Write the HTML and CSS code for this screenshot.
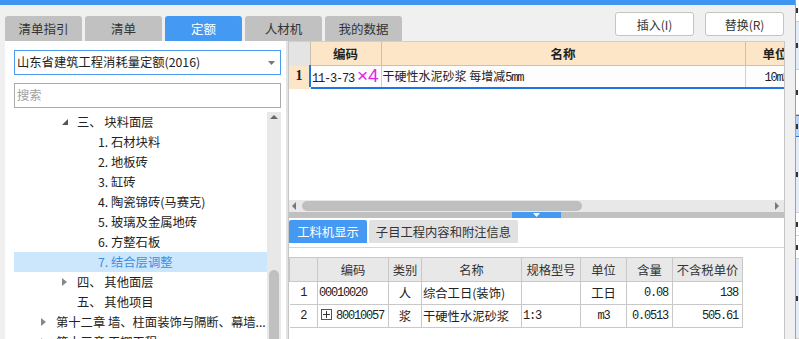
FILE: index.html
```html
<!DOCTYPE html>
<html lang="zh-CN">
<head>
<meta charset="utf-8">
<title>定额</title>
<link rel="stylesheet" href="styles.css">
</head>
<body>
<div class="app">
  <div class="main">
    <div class="topbar"></div>
    <div class="toolbar">
      <div class="tabs">
        <div class="tab">清单指引</div>
        <div class="tab">清单</div>
        <div class="tab active">定额</div>
        <div class="tab">人材机</div>
        <div class="tab">我的数据</div>
      </div>
      <div class="btns">
        <div class="btn">插入(I)</div>
        <div class="btn">替换(R)</div>
      </div>
    </div>
    <div class="body">
      <div class="left">
        <div class="select">
          <span>山东省建筑工程消耗量定额(2016)</span>
          <svg class="caret" width="7" height="4" viewBox="0 0 7 4"><path d="M0 0H7L3.5 4Z" fill="#777"/></svg>
        </div>
        <div class="search">搜索</div>
        <div class="treewrap">
          <div class="tree">
            <div class="row l1"><span class="arr"><svg width="6" height="6" viewBox="0 0 6 6"><path d="M6 0V6H0Z" fill="#555"/></svg></span><span>三、 块料面层</span></div>
            <div class="row l2"><span class="arr"></span><span>1. 石材块料</span></div>
            <div class="row l2"><span class="arr"></span><span>2. 地板砖</span></div>
            <div class="row l2"><span class="arr"></span><span>3. 缸砖</span></div>
            <div class="row l2"><span class="arr"></span><span>4. 陶瓷锦砖(马赛克)</span></div>
            <div class="row l2"><span class="arr"></span><span>5. 玻璃及金属地砖</span></div>
            <div class="row l2"><span class="arr"></span><span>6. 方整石板</span></div>
            <div class="row l2 sel"><span class="arr"></span><span>7. 结合层调整</span></div>
            <div class="row l1"><span class="arr"><svg width="5" height="8" viewBox="0 0 5 8"><path d="M0 0L5 4L0 8Z" fill="#888"/></svg></span><span>四、 其他面层</span></div>
            <div class="row l1"><span class="arr"></span><span>五、 其他项目</span></div>
            <div class="row l0"><span class="arr"><svg width="5" height="8" viewBox="0 0 5 8"><path d="M0 0L5 4L0 8Z" fill="#888"/></svg></span><span>第十二章 墙、柱面装饰与隔断、幕墙...</span></div>
            <div class="row l0"><span class="arr"><svg width="5" height="8" viewBox="0 0 5 8"><path d="M0 0L5 4L0 8Z" fill="#888"/></svg></span><span>第十三章 天棚工程</span></div>
          </div>
          <div class="vscroll">
            <svg class="up" width="8" height="4" viewBox="0 0 8 4"><path d="M0 4H8L4 0Z" fill="#666"/></svg>
            <div class="vthumb"></div>
          </div>
        </div>
      </div>
      <div class="gap"></div>
      <div class="right">
        <div class="topgrid">
          <table class="qt">
            <colgroup><col class="c0"><col class="c1"><col class="c2"><col class="c3"></colgroup>
            <thead>
              <tr><th class="corner"></th><th>编码</th><th>名称</th><th>单位</th></tr>
            </thead>
            <tbody>
              <tr class="cur">
                <td class="rn">1</td>
                <td class="code"><span class="mono">11-3-73</span><span class="mul">×4</span></td>
                <td class="nm">干硬性水泥砂浆 每增减<span class="mono">5mm</span></td>
                <td class="unit"><span class="mono">10m2</span></td>
              </tr>
            </tbody>
          </table>
        </div>
        <div class="hscroll">
          <svg width="4" height="8" viewBox="0 0 4 8"><path d="M4 0V8L0 4Z" fill="#777"/></svg>
          <div class="htrack"><div class="hthumb"></div></div>
          <svg width="4" height="8" viewBox="0 0 4 8"><path d="M0 0V8L4 4Z" fill="#777"/></svg>
        </div>
        <div class="splitter"><div class="grip"><svg width="7" height="4" viewBox="0 0 7 4"><path d="M0 0H7L3.5 4Z" fill="#fff"/></svg></div></div>
        <div class="bottom">
          <div class="btabs">
            <div class="btab active">工料机显示</div>
            <div class="btab">子目工程内容和附注信息</div>
          </div>
          <div class="bpanel">
            <table class="lt">
              <colgroup><col style="width:28px"><col style="width:71px"><col style="width:33px"><col style="width:100px"><col style="width:59px"><col style="width:46px"><col style="width:46px"><col style="width:70px"></colgroup>
              <thead>
                <tr><th></th><th>编码</th><th>类别</th><th>名称</th><th>规格型号</th><th>单位</th><th>含量</th><th>不含税单价</th></tr>
              </thead>
              <tbody>
                <tr><td class="ctr mono">1</td><td class="mono">00010020</td><td class="ctr">人</td><td>综合工日(装饰)</td><td></td><td class="ctr">工日</td><td class="num mono">0.08</td><td class="num mono">138</td></tr>
                <tr><td class="ctr mono">2</td><td class="mono"><span class="plus"></span>80010057</td><td class="ctr">浆</td><td>干硬性水泥砂浆</td><td class="mono">1:3</td><td class="ctr mono">m3</td><td class="num mono">0.0513</td><td class="num mono">505.61</td></tr>
              </tbody>
            </table>
          </div>
        </div>
      </div>
    </div>
  </div>
  <div class="side">
    <div class="seg w h22"><i class="mk"></i></div>
    <div class="seg b h48"><i class="mk"></i></div>
    <div class="seg w h45"><i class="mk"></i></div>
    <div class="seg hl h22"><i class="mk"></i></div>
    <div class="seg b h76"><i class="mk"></i></div>
    <div class="seg w h23"><i class="mk"></i></div>
    <div class="seg w h23"><i class="mk"></i></div>
    <div class="seg b h80"><i class="mk"></i></div>
  </div>
</div>
</body>
</html>
```
FILE: styles.css
```css
* { box-sizing: border-box; }
html, body { margin: 0; padding: 0; }
body {
  width: 799px;
  height: 339px;
  overflow: hidden;
  background: #f0f0f0;
  font-family: "Noto Sans CJK SC", "Noto Sans", sans-serif;
  font-size: 12px;
  color: #222;
}
.app { display: flex; height: 339px; overflow: hidden; }
.main { width: 795px; display: flex; flex-direction: column; background: #f0f0f0; }
.topbar { height: 5px; background: #3f95f2; flex: none; }
.toolbar {
  height: 36px;
  flex: none;
  display: flex;
  justify-content: space-between;
  padding: 0 11px 0 5px;
}
.tabs { display: flex; gap: 3px; align-self: flex-end; }
.tab {
  width: 77px;
  height: 25px;
  background: #c1c1c1;
  border-radius: 3px 3px 0 0;
  display: flex;
  align-items: center;
  justify-content: center;
  color: #333;
  font-size: 12.5px;
}
.tab.active { background: #4499f3; color: #fff; }
.btns { display: flex; gap: 11px; padding-top: 7px; }
.btn {
  height: 24px;
  width: 79px;
  background: #fff;
  border: 1px solid #c4c4c4;
  border-radius: 3px;
  display: flex;
  align-items: center;
  justify-content: center;
  color: #333;
}
.body { flex: 1; display: flex; min-height: 0; }
.left {
  margin-left: 5px;
  width: 281px;
  background: #fff;
  padding: 9px 5px 0 9px;
  display: flex;
  flex-direction: column;
  min-height: 0;
}
.select {
  height: 25px;
  border: 1px solid #4a9aee;
  display: flex;
  align-items: center;
  justify-content: space-between;
  padding: 0 5px 1px 2px;
  font-size: 12.3px;
  flex: none;
}
.caret { margin-top: 1px; }
.search {
  margin-top: 8px;
  height: 25px;
  border: 1px solid #ababab;
  padding: 0 0 1px 2px;
  display: flex;
  align-items: center;
  color: #a0a0a0;
  font-size: 12.3px;
  flex: none;
}
.treewrap { margin-top: 4px; flex: 1; display: flex; min-height: 0; }
.tree { flex: 1; overflow: hidden; }
.row {
  height: 20px;
  display: flex;
  align-items: center;
  white-space: nowrap;
  font-size: 12.3px;
  color: #222;
}
.row.l0 { padding-left: 27px; }
.row.l1 { padding-left: 48px; }
.row.l2 { padding-left: 69px; }
.arr { width: 15px; flex: none; display: flex; align-items: center; }
.row.sel { background: #cce6fb; color: #3b8ee6; }
.vscroll {
  width: 14px;
  background: #e8e8e8;
  display: flex;
  flex-direction: column;
  align-items: center;
  justify-content: space-between;
  padding-top: 3px;
}
.vthumb {
  width: 10px;
  height: 69px;
  background: #c0c0c0;
  border-radius: 5px 5px 0 0;
}
.gap { width: 2px; background: #e3e3e3; }
.right {
  width: 497px;
  background: #fff;
  border-left: 1px solid #c6c6c6;
  border-right: 1px solid #c6c6c6;
  display: flex;
  flex-direction: column;
  min-height: 0;
}
.topgrid {
  height: 159px;
  flex: none;
  overflow: hidden;
  border-top: 1px solid #cfcfcf;
  background: #fff;
}
table { border-collapse: collapse; table-layout: fixed; }
.qt { width: 516px; }
.qt .c0 { width: 21px; }
.qt .c1 { width: 71px; }
.qt .c2 { width: 364px; }
.qt .c3 { width: 60px; }
.qt th {
  height: 23px;
  background: #fde6c8;
  border-right: 1px solid #cdbfae;
  border-bottom: 1px solid #a9c7ea;
  font-weight: bold;
  font-size: 12.5px;
  color: #222;
  padding: 0;
}
.qt th.corner { background: #e4e4e4; border-bottom-color: #e4e4e4; }
.qt td {
  height: 23px;
  padding: 0;
  border-right: 1px solid #d0d0d0;
  border-bottom: 2px solid #1f74e6;
  background: #fdfdfd;
  white-space: nowrap;
  overflow: hidden;
}
.qt td.rn {
  background: #fde6c8;
  border-bottom: 2px solid #fde6c8;
  text-align: center;
  font-family: "Liberation Serif", serif;
  font-weight: bold;
  font-size: 14px;
}
.qt td.code { border-left: 2px solid #1f74e6; padding-left: 1px; }
.mono {
  font-family: "Liberation Mono", "DejaVu Sans Mono", monospace;
  font-size: 12px;
  letter-spacing: -1.2px;
}
.mul {
  color: #e524e8;
  font-family: "Liberation Sans", sans-serif;
  font-size: 19px;
  margin-left: 3px;
  line-height: 1;
}
.qt td.nm { padding-left: 1px; }
.qt td.unit { padding-left: 19px; }
.hscroll {
  height: 12px;
  flex: none;
  background: #e8e8e8;
  display: flex;
  align-items: center;
  padding: 0 5px 0 3px;
  gap: 6px;
}
.htrack { flex: 1; height: 10px; }
.hthumb { width: 280px; height: 10px; background: #bfbfbf; border-radius: 5px; }
.splitter {
  height: 6px;
  flex: none;
  background: #c0c0c0;
  display: flex;
  justify-content: center;
}
.grip {
  width: 49px;
  background: #4499f3;
  display: flex;
  align-items: center;
  justify-content: center;
}
.bottom { flex: 1; display: flex; flex-direction: column; padding-top: 2px; min-height: 0; }
.btabs { display: flex; gap: 2px; height: 23px; flex: none; }
.btab {
  height: 23px;
  padding: 0;
  width: 149px;
  background: #e1e1e1;
  border-radius: 2px 2px 0 0;
  display: flex;
  align-items: center;
  justify-content: center;
  color: #333;
  font-size: 12.3px;
}
.btab.active { width: 78px; background: #4499f3; color: #fff; }
.bpanel {
  flex: 1;
  margin-top: 4px;
  border-top: 1px solid #d6d6d6;
  padding-top: 9px;
}
.lt th {
  height: 24px;
  background: #e8e8e8;
  border: 1px solid #c8c8c8;
  font-weight: normal;
  font-size: 12.3px;
  color: #333;
  padding: 0;
}
.lt td {
  height: 23px;
  border: 1px solid #c8c8c8;
  padding: 0 1px;
  white-space: nowrap;
  overflow: hidden;
  font-size: 12.3px;
  color: #222;
}
.lt td.mono, .lt td .mono { font-size: 12px; }
.lt td.ctr { text-align: center; }
.lt td.num { text-align: right; padding-right: 4px; }
.lt td:first-child { border-left: none; }
.plus {
  display: inline-block;
  width: 11px;
  height: 11px;
  border: 1px solid #555;
  vertical-align: -1px;
  margin: 0 4px 0 2px;
  background:
    linear-gradient(#333, #333) center / 7px 1px no-repeat,
    linear-gradient(#333, #333) center / 1px 7px no-repeat;
}
.side {
  width: 4px;
  border-left: 1px solid #a0a0a0;
  display: flex;
  flex-direction: column;
}
.seg { flex: none; border-bottom: 1px solid #cfcfcf; display: flex; align-items: center; }
.seg.w { background: #fff; }
.seg.b { background: #e4ecf8; }
.seg.hl { background: #b8d4f6; border-top: 1px solid #1f74e6; border-bottom: 1px solid #1f74e6; }
.mk { display: block; width: 2px; height: 5px; background: #333; }
.h22 { height: 22px; }
.h23 { height: 23px; }
.h45 { height: 45px; }
.h48 { height: 48px; }
.h76 { height: 76px; }
.h80 { height: 80px; }
```
